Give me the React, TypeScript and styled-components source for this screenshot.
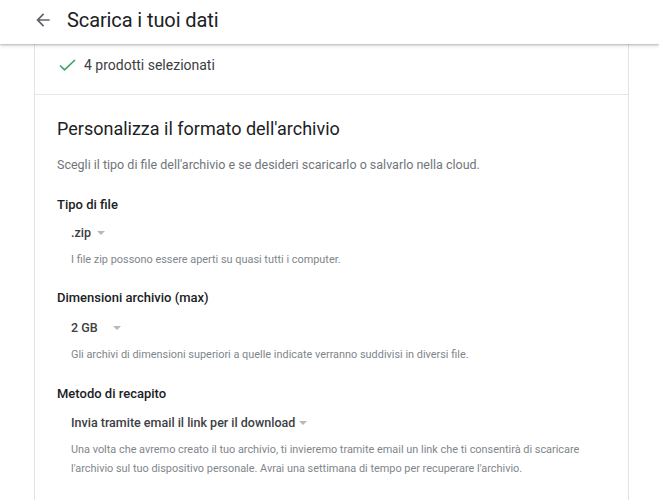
import React from "react";
import styled, { createGlobalStyle } from "styled-components";

const Global = createGlobalStyle`
  html, body { margin: 0; padding: 0; background: #fff; }
  body { font-family: Roboto, "Noto Sans", Arial, sans-serif; color: #3c4043; }
`;

const Page = styled.div`
  width: 659px;
  height: 500px;
  overflow: hidden;
  position: relative;
  background: #fff;
`;

const Header = styled.header`
  height: 44px;
  box-sizing: border-box;
  padding: 0 0 5px 33px;
  display: flex;
  align-items: center;
  gap: 14px;
  background: #fff;
  box-shadow: 0 1px 2px rgba(60, 64, 67, 0.3), 0 2px 4px rgba(60, 64, 67, 0.12);
  position: relative;
  z-index: 1;
`;

const BackButton = styled.span`
  display: flex;
  width: 20px;
  height: 20px;
  align-items: center;
  justify-content: center;
`;

const Title = styled.h1`
  margin: 0;
  font-size: 20px;
  font-weight: 400;
  color: #202124;
  letter-spacing: -0.1px;
`;

const Card = styled.main`
  margin-left: 34px;
  width: 593px;
  border-left: 1px solid #e3e3e3;
  border-right: 1px solid #e3e3e3;
  min-height: 456px;
`;

const SelectedRow = styled.div`
  height: 51px;
  box-sizing: border-box;
  padding: 0 0 9px 24px;
  display: flex;
  align-items: center;
  gap: 8px;
  border-bottom: 1px solid #e6e6e6;
  font-size: 14px;
  color: #3c4043;
`;

const Section = styled.section`
  padding: 22px 0 0 22px;
`;

const Heading = styled.h2`
  margin: 0;
  font-size: 18px;
  font-weight: 400;
  color: #202124;
  line-height: 24px;
`;

const Lead = styled.p`
  margin: 15px 0 0;
  font-size: 12.5px;
  color: #70757a;
  line-height: 18px;
`;

const Field = styled.div<{ $top: number }>`
  margin-top: ${(p) => p.$top}px;
`;

const Label = styled.div`
  font-size: 13px;
  font-weight: 500;
  color: #202124;
  line-height: 18px;
`;

const Select = styled.div<{ $top: number }>`
  display: flex;
  align-items: center;
  margin: ${(p) => p.$top}px 0 0 14px;
  font-size: 12.5px;
  font-weight: 500;
  color: #3c4043;
  line-height: 18px;
`;

const Caret = styled.span<{ $gap: number }>`
  display: inline-block;
  width: 0;
  height: 0;
  margin-left: ${(p) => p.$gap}px;
  border-left: 4px solid transparent;
  border-right: 4px solid transparent;
  border-top: 4px solid #b8b8b8;
`;

const Help = styled.p`
  margin: 8px 0 0 14px;
  font-size: 10.9px;
  color: #80868b;
  line-height: 19px;
  max-width: 520px;
`;

export default function App() {
  return (
    <Page>
      <Global />
      <Header>
        <BackButton>
          <svg width="20" height="20" viewBox="0 0 24 24">
            <path d="M20 11H7.83l5.59-5.59L12 4l-8 8 8 8 1.41-1.41L7.83 13H20v-2z" fill="#5f6368" />
          </svg>
        </BackButton>
        <Title>Scarica i tuoi dati</Title>
      </Header>
      <Card>
        <SelectedRow>
          <svg width="17" height="12" viewBox="0 0 17 12">
            <polyline points="1,6.5 5.5,10.8 16,1" fill="none" stroke="#3ca36b" strokeWidth="1.7" />
          </svg>
          <span>4 prodotti selezionati</span>
        </SelectedRow>
        <Section>
          <Heading>Personalizza il formato dell'archivio</Heading>
          <Lead>Scegli il tipo di file dell'archivio e se desideri scaricarlo o salvarlo nella cloud.</Lead>
          <Field $top={22}>
            <Label>Tipo di file</Label>
            <Select $top={10}>
              .zip
              <Caret $gap={6} />
            </Select>
            <Help>I file zip possono essere aperti su quasi tutti i computer.</Help>
          </Field>
          <Field $top={20}>
            <Label>Dimensioni archivio (max)</Label>
            <Select $top={12}>
              2 GB
              <Caret $gap={15} />
            </Select>
            <Help>Gli archivi di dimensioni superiori a quelle indicate verranno suddivisi in diversi file.</Help>
          </Field>
          <Field $top={21}>
            <Label>Metodo di recapito</Label>
            <Select $top={11}>
              Invia tramite email il link per il download
              <Caret $gap={4} />
            </Select>
            <Help>
              Una volta che avremo creato il tuo archivio, ti invieremo tramite email un link che ti consentirà di scaricare
              l'archivio sul tuo dispositivo personale. Avrai una settimana di tempo per recuperare l'archivio.
            </Help>
          </Field>
        </Section>
      </Card>
    </Page>
  );
}
